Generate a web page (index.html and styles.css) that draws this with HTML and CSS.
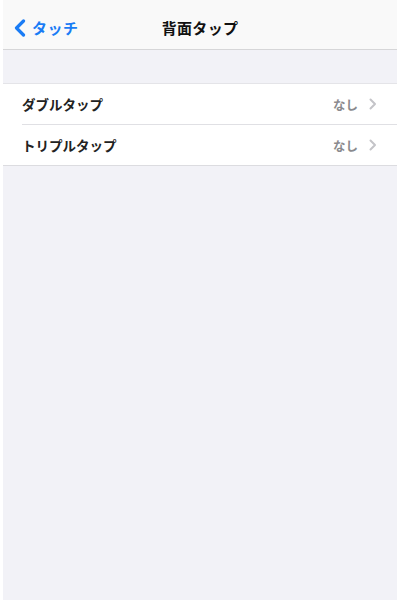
FILE: index.html
```html
<!DOCTYPE html>
<html lang="ja">

<head>
    <meta charset="UTF-8">
    <title>背面タップ</title>
    <link rel="stylesheet" href="styles.css">
</head>

<body>
    <div class="screen">
        <div class="nav-bar">
            <a class="nav-back">
                <svg class="back-icon" width="12" height="18" viewBox="0 0 12 18">
                    <path d="M9.5 2 L2.5 9 L9.5 16" fill="none" stroke="#1a7cf5" stroke-width="3.2" stroke-linecap="round" stroke-linejoin="round"/>
                </svg>
                <span>タッチ</span>
            </a>
            <h1 class="nav-title">背面タップ</h1>
        </div>
        <div class="spacer"></div>
        <ul class="setting-list">
            <li>
                <span class="label">ダブルタップ</span>
                <span class="value">なし</span>
                <svg class="chevron" width="8" height="12" viewBox="0 0 8 12">
                    <path d="M1.5 1.5 L6 6 L1.5 10.5" fill="none" stroke="#c4c4c8" stroke-width="2" stroke-linecap="round" stroke-linejoin="round"/>
                </svg>
            </li>
            <li>
                <span class="label">トリプルタップ</span>
                <span class="value">なし</span>
                <svg class="chevron" width="8" height="12" viewBox="0 0 8 12">
                    <path d="M1.5 1.5 L6 6 L1.5 10.5" fill="none" stroke="#c4c4c8" stroke-width="2" stroke-linecap="round" stroke-linejoin="round"/>
                </svg>
            </li>
        </ul>
    </div>
</body>

</html>
```

FILE: styles.css
```css
html, body { margin: 0; padding: 0; background: #fff; }
body { font-family: "Noto Sans CJK JP", "Noto Sans", sans-serif; }

.screen {
    margin: 0 3px 0 3px;
    height: 600px;
    background-color: #f2f2f7;
}

.nav-bar {
    position: relative;
    display: flex;
    align-items: center;
    justify-content: center;
    box-sizing: border-box;
    height: 50px;
    padding-top: 6px;
    background-color: #f9f9f9;
    border-bottom: 1px solid #d6d6d8;
}

.nav-back {
    position: absolute;
    left: 11px;
    top: 6px;
    bottom: 0;
    display: flex;
    align-items: center;
    gap: 6px;
    color: #1a7cf5;
    font-size: 15px;
    font-weight: 700;
    letter-spacing: 0.5px;
}

.nav-title {
    margin: 0;
    font-size: 15px;
    font-weight: 700;
    color: #111;
    letter-spacing: 0.3px;
}

.spacer { height: 33px; }

.setting-list {
    list-style: none;
    margin: 0;
    padding: 0 0 0 19px;
    background-color: #fff;
    border-top: 1px solid #e4e4e8;
    border-bottom: 1px solid #dcdce0;
}

.setting-list li {
    display: flex;
    align-items: center;
    height: 40px;
    padding-right: 20px;
}
.setting-list li + li { border-top: 1px solid #e0e0e4; }

.setting-list .label {
    flex: 1;
    font-size: 13.5px;
    font-weight: 700;
    color: #222;
}

.setting-list .value {
    font-size: 12.5px;
    font-weight: 700;
    color: #8a8a8e;
    margin-right: 11px;
}
```
